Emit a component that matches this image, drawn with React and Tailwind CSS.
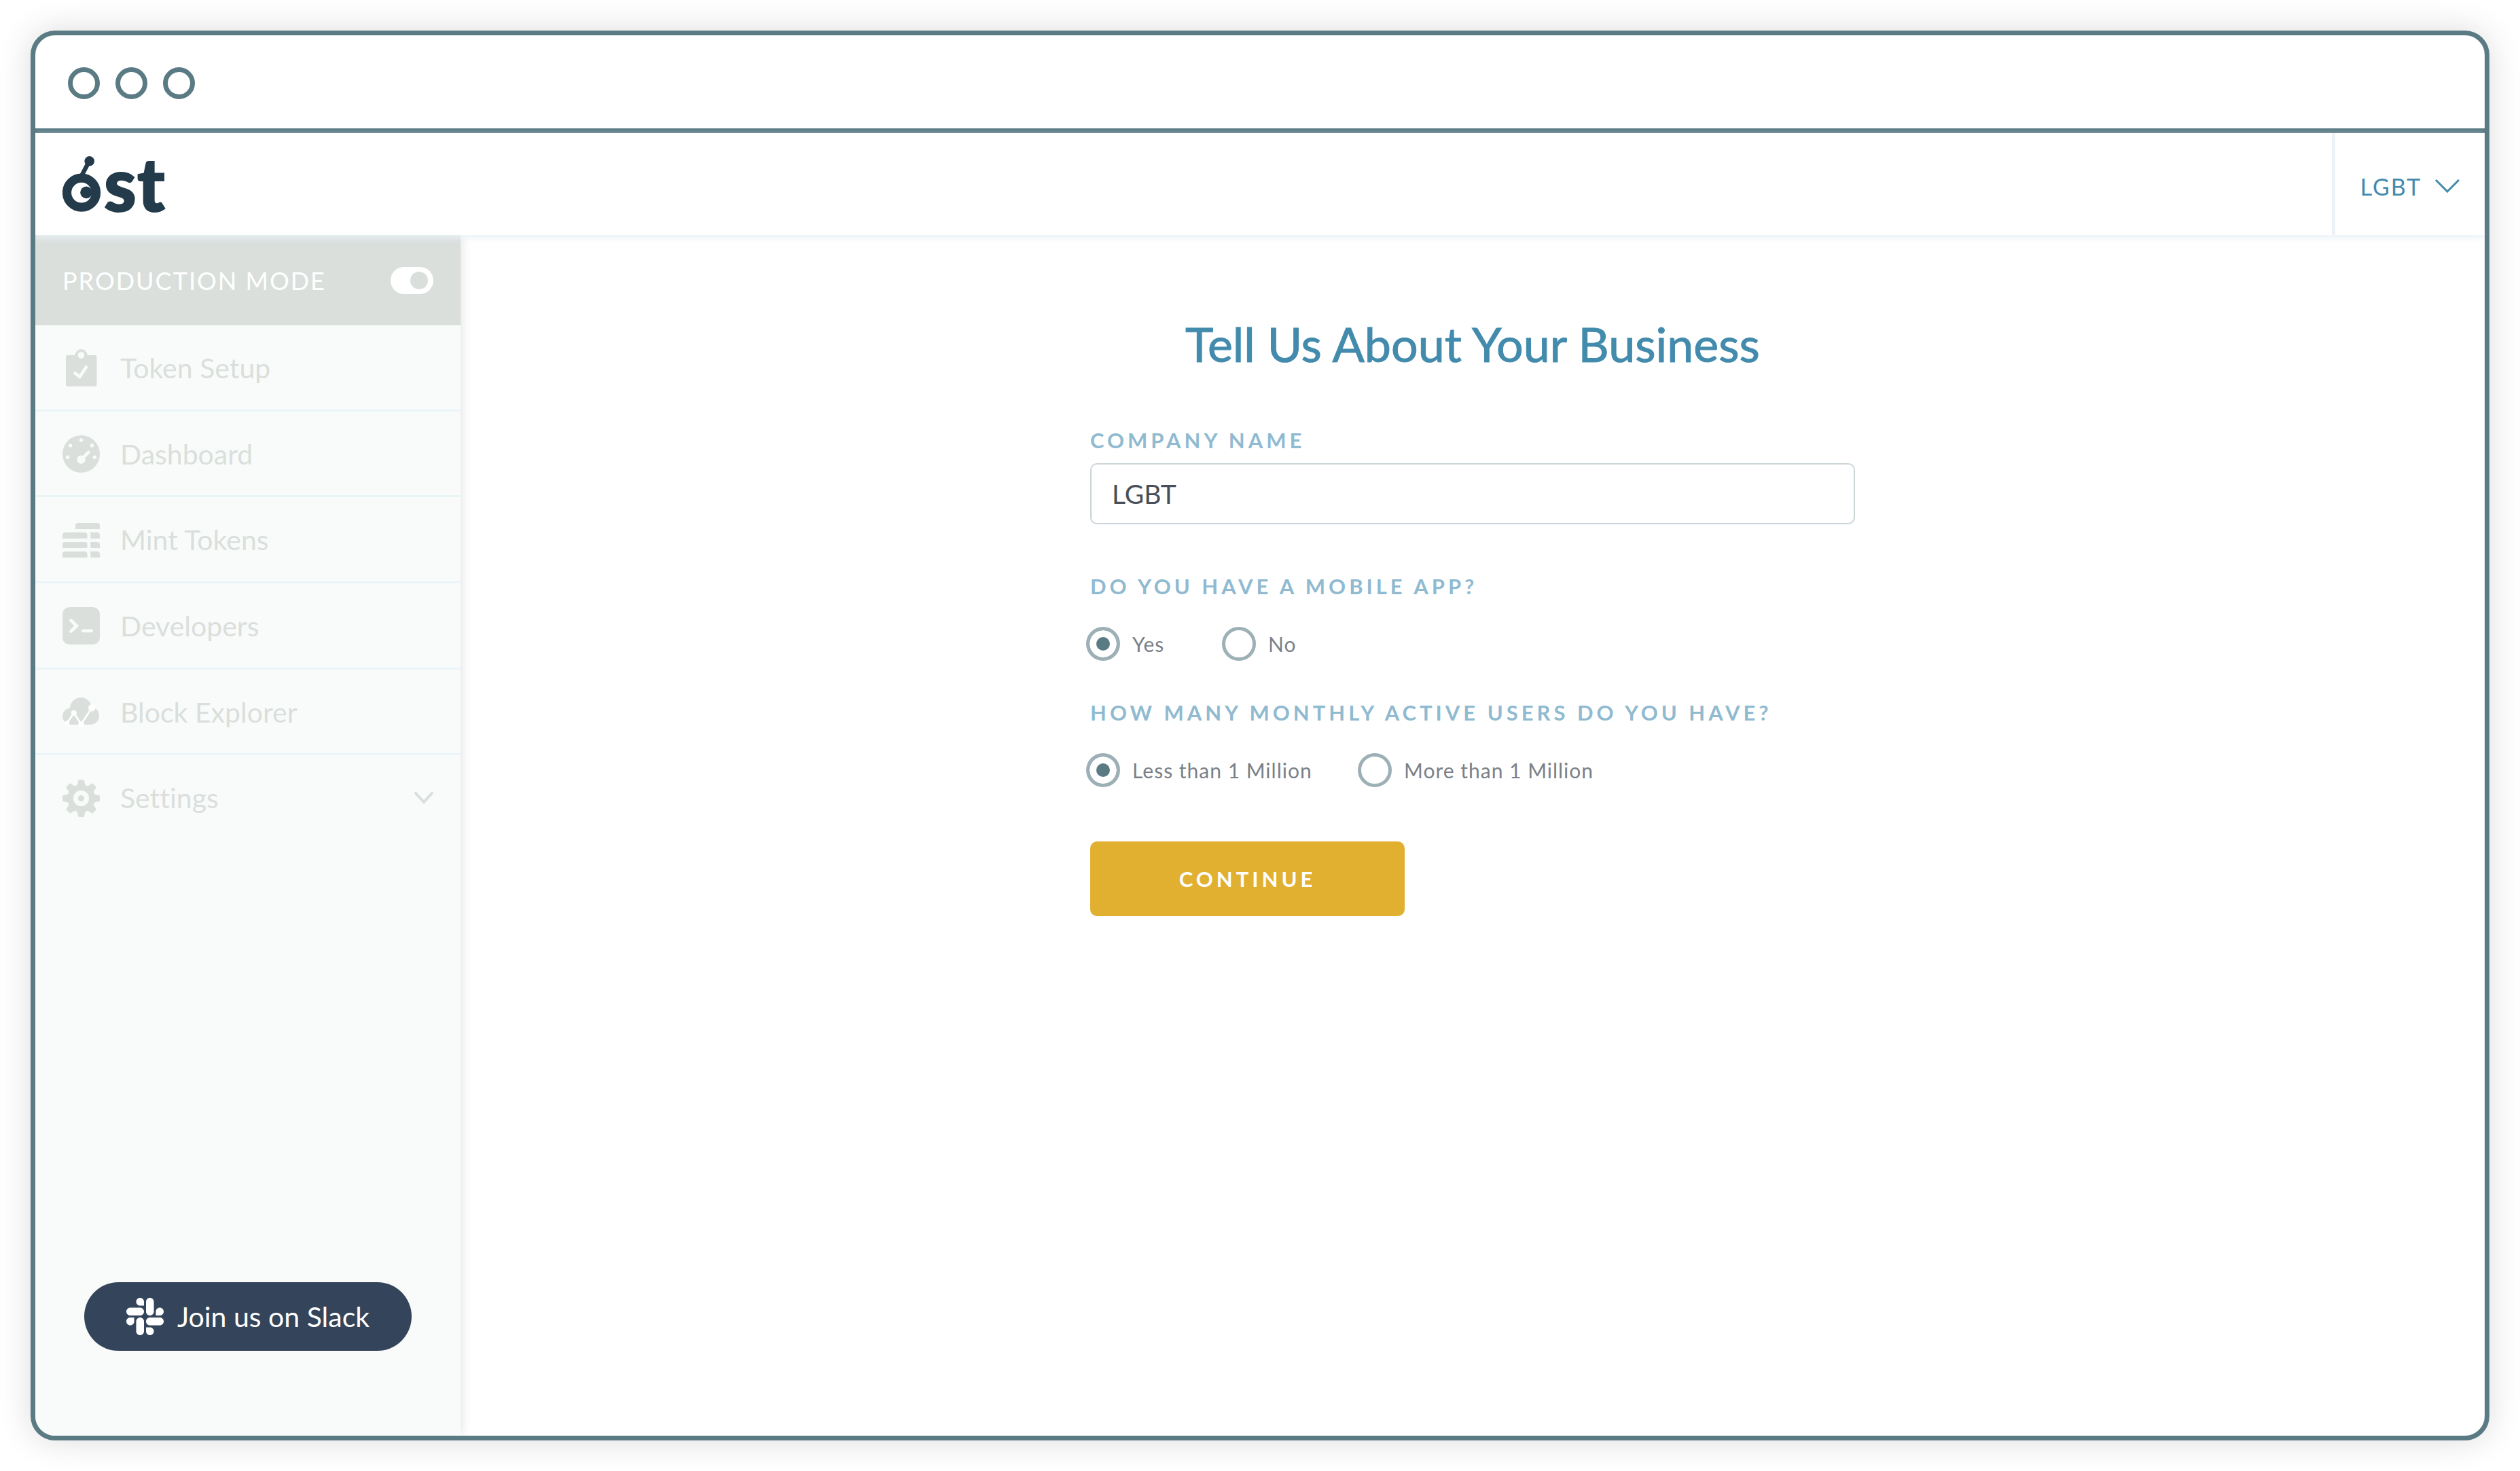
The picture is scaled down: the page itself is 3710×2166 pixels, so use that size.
import { useState } from "react";
import { FaSlack } from "react-icons/fa";

function Logo() {
  return (
    <svg viewBox="12 -17 160 136" className="h-[136px] w-[160px]" fill="#233b4b" role="img" aria-label="ost">
      <path d="M39.5 40 L51 18" stroke="#233b4b" strokeWidth="6.5" />
      <circle cx="51.7" cy="17.3" r="7.3" />
      <circle cx="40" cy="63.7" r="21.5" fill="none" stroke="#233b4b" strokeWidth="13.2" />
      <circle cx="47" cy="63.4" r="8.8" />
      <g fontFamily="Lato, sans-serif" fontWeight="900" fontSize="108" stroke="#233b4b" strokeWidth="2">
        <text x="73" y="91">s</text>
        <text x="122" y="91">t</text>
      </g>
    </svg>
  );
}

function ClipboardIcon() {
  return (
    <svg viewBox="0 0 55 55" className="size-[55px]" fill="currentColor" aria-hidden="true">
      <rect x="5" y="9" width="45.5" height="46" rx="3" />
      <circle cx="27.5" cy="9" r="9" />
      <circle cx="27.5" cy="9" r="4.8" fill="#f9fbfa" />
      <path d="M18.5 35.5 L25.3 41 L35 26.5" fill="none" stroke="#f9fbfa" strokeWidth="4.6" strokeLinecap="round" />
    </svg>
  );
}

function GaugeIcon() {
  return (
    <svg viewBox="0 0 55 55" className="size-[55px]" fill="currentColor" aria-hidden="true">
      <circle cx="27.5" cy="27.5" r="27.5" />
      <g fill="#f9fbfa">
        <circle cx="27.5" cy="7" r="2.7" />
        <circle cx="11.5" cy="15" r="2.7" />
        <circle cx="43.5" cy="15" r="2.7" />
        <circle cx="7.5" cy="32.3" r="2.7" />
        <circle cx="47.5" cy="32.3" r="2.7" />
        <circle cx="27.5" cy="35.7" r="6.2" />
      </g>
      <path d="M27.5 35.7 L38.3 24.8" stroke="#f9fbfa" strokeWidth="4.5" strokeLinecap="round" />
    </svg>
  );
}

function BricksIcon() {
  return (
    <svg viewBox="0 0 55 55" className="size-[55px]" fill="currentColor" aria-hidden="true">
      <path d="M19 11 V6 Q19 2 23 2 H51 Q55 2 55 6 V11 Z" />
      {[16, 30, 44].map((y) => (
        <g key={y}>
          <path d={`M0 ${y + 9} v-5 q0 -4 4 -4 h28.5 q4 0 4 4 v5 Z`} />
          <path d={`M41.3 ${y + 9} v-5 q0 -4 -1 -4 h10.7 q4 0 4 4 v5 Z`} />
        </g>
      ))}
    </svg>
  );
}

function TerminalIcon() {
  return (
    <svg viewBox="0 0 55 55" className="size-[55px]" fill="currentColor" aria-hidden="true">
      <rect width="55" height="55" rx="10" />
      <path d="M12.5 19.5 L20.8 27.5 L12.5 35.5 M30.3 34.8 H42.7" fill="none" stroke="#f9fbfa" strokeWidth="4.8" strokeLinecap="round" />
    </svg>
  );
}

function CloudIcon() {
  return (
    <svg viewBox="0 0 55 55" className="size-[55px]" fill="currentColor" aria-hidden="true">
      <circle cx="27" cy="22" r="16" />
      <circle cx="12.3" cy="33.7" r="12.3" />
      <circle cx="41" cy="33" r="13" />
      <rect x="12" y="24" width="29" height="22" />
      <g fill="#ffffff">
        <circle cx="6.7" cy="43.7" r="3.5" />
        <circle cx="16.7" cy="28.7" r="4" />
        <circle cx="27.5" cy="45.3" r="4.2" />
        <circle cx="43.2" cy="21.3" r="5.2" />
      </g>
      <path d="M6.7 43.7 L16.7 28.7 L27.5 45.3 L43.2 21.3" fill="none" stroke="#ffffff" strokeWidth="2.6" />
    </svg>
  );
}

function GearIcon() {
  return (
    <svg viewBox="0 0 55 55" className="size-[55px]" fill="currentColor" aria-hidden="true">
      <circle cx="27.5" cy="27.5" r="20" />
      {[0, 45, 90, 135, 180, 225, 270, 315].map((a) => (
        <path key={a} transform={`rotate(${a} 27.5 27.5)`} d="M18.5 10 Q22.3 8.5 22.6 3 Q22.8 0 24.5 0 H30.5 Q32.2 0 32.4 3 Q32.7 8.5 36.5 10 Z" />
      ))}
      <circle cx="27.5" cy="27.5" r="11.5" fill="#f9fbfa" />
      <circle cx="27.5" cy="27.5" r="4.6" />
    </svg>
  );
}

const items = [
  { label: "Token Setup", Icon: ClipboardIcon },
  { label: "Dashboard", Icon: GaugeIcon },
  { label: "Mint Tokens", Icon: BricksIcon },
  { label: "Developers", Icon: TerminalIcon },
  { label: "Block Explorer", Icon: CloudIcon },
  { label: "Settings", Icon: GearIcon, menu: true },
];

function Sidebar() {
  const [production, setProduction] = useState(true);
  return (
    <aside className="flex w-[626px] shrink-0 flex-col bg-[#f9fbfa] text-[#dadfdc] shadow-[0_0_16px_rgba(0,0,0,0.14)]">
      <label className="flex h-[133px] items-center justify-between bg-[#dadfdc] px-10 text-[36px] tracking-[2px] text-white">
        PRODUCTION MODE
        <input
          type="checkbox"
          role="switch"
          checked={production}
          onChange={(e) => setProduction(e.target.checked)}
          className="flex h-10 w-[63px] appearance-none items-center rounded-full bg-white px-2 before:size-[26px] before:rounded-full before:bg-[#dadfdc] checked:justify-end checked:before:block"
        />
      </label>
      <nav className="grid h-[760px] grid-rows-6">
        {items.map(({ label, Icon, menu }) => (
          <a
            key={label}
            href="#"
            className="flex items-center gap-[30px] border-b-3 border-[#eaf5f7] px-10 pt-0.5 text-[41px] last:border-transparent"
          >
            <Icon />
            <span className="grow">{label}</span>
            {menu && (
              <svg viewBox="0 0 28 18" className="h-[18px] w-7" fill="none" aria-hidden="true">
                <path d="M2 2 L14 15 L26 2" stroke="currentColor" strokeWidth="4" strokeLinecap="round" />
              </svg>
            )}
          </a>
        ))}
      </nav>
      <a
        href="#"
        className="mt-auto mr-[72px] mb-[125px] ml-[72px] flex h-[101px] items-center justify-center gap-5 rounded-full bg-[#34445a] text-[41px] text-white"
      >
        <FaSlack className="h-[63px] w-[55px]" aria-hidden="true" />
        Join us on Slack
      </a>
    </aside>
  );
}

function RadioGroup({ legend, name, options, column }) {
  return (
    <fieldset>
      <legend className="text-[31px] leading-10 font-bold tracking-[5px] text-[#8fbad0]">{legend}</legend>
      <div className="-ml-1.5 flex pt-10">
        {options.map((option, i) => (
          <label key={option} className={`${column} flex items-center gap-[18px] text-[30px] tracking-[1px] text-[#7a8088]`}>
            <input
              type="radio"
              name={name}
              defaultChecked={i === 0}
              className="size-[50px] shrink-0 appearance-none rounded-full border-5 border-[#9db0b6] bg-white checked:bg-[#5a7a84] checked:shadow-[inset_0_0_0_10px_white]"
            />
            <span className="whitespace-nowrap">{option}</span>
          </label>
        ))}
      </div>
    </fieldset>
  );
}

export default function App() {
  return (
    <div className="flex min-h-screen bg-white p-[45px] font-['Lato',sans-serif] [font-variant-ligatures:none]">
      <div className="flex grow flex-col overflow-hidden rounded-[36px] border-7 border-[#5a7a84] bg-white shadow-[0_0_50px_rgba(0,0,0,0.14)]">
        <div className="flex h-[144px] shrink-0 items-center gap-[23px] border-b-7 border-[#5a7a84] px-12 pt-1">
          {[0, 1, 2].map((n) => (
            <span key={n} className="size-[47px] rounded-full border-7 border-[#5a7a84]" />
          ))}
        </div>
        <header className="relative z-10 flex h-[150px] shrink-0 items-center justify-between bg-white pl-10 shadow-[0_4px_10px_#eaf2f6]">
          <Logo />
          <button
            type="button"
            className="flex h-full w-[225px] items-center justify-center gap-5 border-l-5 border-[#edf2f6] pt-1.5 text-[34px] tracking-[2px] text-[#438bad]"
          >
            LGBT
            <svg viewBox="0 0 36 20" className="h-5 w-9" fill="none" aria-hidden="true">
              <path d="M1 1 L18 18 L35 1" stroke="currentColor" strokeWidth="3" />
            </svg>
          </button>
        </header>
        <div className="flex grow">
          <Sidebar />
          <main className="flex grow flex-col items-center px-8 pt-[118px]">
            <h1 className="text-[70px] leading-[84px] font-normal text-[#438bad] [-webkit-text-stroke:1px_#438bad]">
              Tell Us About Your Business
            </h1>
            <form className="mt-20 w-full max-w-[1126px]" onSubmit={(e) => e.preventDefault()}>
              <label htmlFor="company" className="block text-[31px] leading-10 font-bold tracking-[5px] text-[#8fbad0]">
                COMPANY NAME
              </label>
              <input
                id="company"
                type="text"
                defaultValue="LGBT"
                className="mt-3.5 mb-[71px] block h-[90px] w-full rounded-[10px] border-2 border-[#cbd5d8] px-[30px] text-[39px] text-[#484f58]"
              />
              <div className="grid gap-14">
                <RadioGroup legend="DO YOU HAVE A MOBILE APP?" name="app" options={["Yes", "No"]} column="w-[200px]" />
                <RadioGroup
                  legend="HOW MANY MONTHLY ACTIVE USERS DO YOU HAVE?"
                  name="users"
                  options={["Less than 1 Million", "More than 1 Million"]}
                  column="w-[400px]"
                />
              </div>
              <button
                type="submit"
                className="mt-20 h-[110px] w-[463px] rounded-[10px] bg-[#e2b031] text-[31px] font-bold tracking-[5px] text-white"
              >
                CONTINUE
              </button>
            </form>
          </main>
        </div>
      </div>
    </div>
  );
}
